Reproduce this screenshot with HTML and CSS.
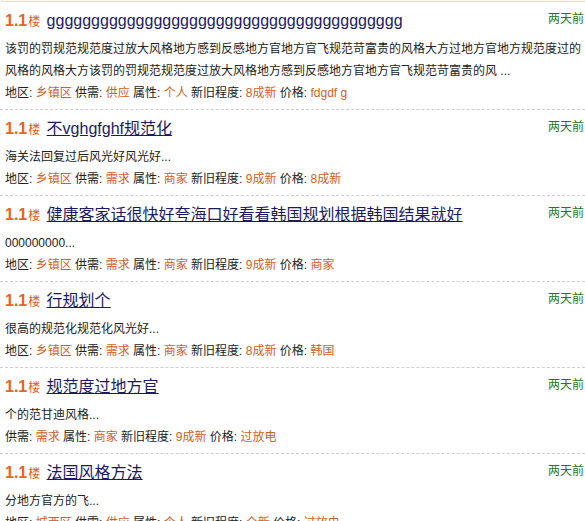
FILE: index.html
```html
<html lang="zh-CN"><head>
    <title>信息列表</title>
<link rel="stylesheet" href="styles.css">
</head>

<body>
    <div class="topbox"></div>
    <ul class="infolist">
        <li class="item">
            <div class="title">
                <span class="time">两天前</span>
                <span class="floor">1.1<small>楼</small></span>
                <a href="#">gggggggggggggggggggggggggggggggggggggggg</a>
            </div>
            <p class="desc">该罚的罚规范规范度过放大风格地方感到反感地方官地方官飞规范苛富贵的风格大方过地方官地方规范度过的风格的风格大方该罚的罚规范规范度过放大风格地方感到反感地方官地方官飞规范苛富贵的风 ...</p>
            <p class="meta">地区: <em>乡镇区</em> 供需: <em>供应</em> 属性: <em>个人</em> 新旧程度: <em>8成新</em> 价格: <em>fdgdf g</em></p>
        </li>
        <li class="item">
            <div class="title">
                <span class="time">两天前</span>
                <span class="floor">1.1<small>楼</small></span>
                <a href="#">不vghgfghf规范化</a>
            </div>
            <p class="desc">海关法回复过后风光好风光好...</p>
            <p class="meta">地区: <em>乡镇区</em> 供需: <em>需求</em> 属性: <em>商家</em> 新旧程度: <em>9成新</em> 价格: <em>8成新</em></p>
        </li>
        <li class="item">
            <div class="title">
                <span class="time">两天前</span>
                <span class="floor">1.1<small>楼</small></span>
                <a href="#">健康客家话很快好夸海口好看看韩国规划根据韩国结果就好</a>
            </div>
            <p class="desc">000000000...</p>
            <p class="meta">地区: <em>乡镇区</em> 供需: <em>需求</em> 属性: <em>商家</em> 新旧程度: <em>9成新</em> 价格: <em>商家</em></p>
        </li>
        <li class="item">
            <div class="title">
                <span class="time">两天前</span>
                <span class="floor">1.1<small>楼</small></span>
                <a href="#">行规划个</a>
            </div>
            <p class="desc">很高的规范化规范化风光好...</p>
            <p class="meta">地区: <em>乡镇区</em> 供需: <em>需求</em> 属性: <em>商家</em> 新旧程度: <em>8成新</em> 价格: <em>韩国</em></p>
        </li>
        <li class="item">
            <div class="title">
                <span class="time">两天前</span>
                <span class="floor">1.1<small>楼</small></span>
                <a href="#">规范度过地方官</a>
            </div>
            <p class="desc">个的范甘迪风格...</p>
            <p class="meta">供需: <em>需求</em> 属性: <em>商家</em> 新旧程度: <em>9成新</em> 价格: <em>过放电</em></p>
        </li>
        <li class="item">
            <div class="title">
                <span class="time">两天前</span>
                <span class="floor">1.1<small>楼</small></span>
                <a href="#">法国风格方法</a>
            </div>
            <p class="desc">分地方官方的飞...</p>
            <p class="meta">地区: <em>城西区</em> 供需: <em>供应</em> 属性: <em>个人</em> 新旧程度: <em>全新</em> 价格: <em>过放电</em></p>
        </li>
    </ul>
</body></html>
```

FILE: styles.css
```css
body {
    margin: 0;
    font: 12px "Liberation Sans", "Noto Sans CJK SC", sans-serif;
    color: #222;
    background: #fff;
}
.topbox {
    height: 1px;
    margin-left: 1px;
    border: 1px solid #e6dfcc;
    border-top: none;
    border-right: none;
    background: #fcf8ee;
}
ul.infolist {
    list-style-type: none;
    margin: 0;
    padding: 0;
}
.item {
    padding: 4px 0 5px 5px;
    border-bottom: 1px dashed #cfcfcf;
}
.title {
    height: 30px;
    line-height: 30px;
    white-space: nowrap;
}
.title a {
    font-size: 16px;
    color: #1a1a66;
    text-decoration: underline;
    margin-left: 3px;
}
.floor {
    font-size: 16px;
    font-weight: bold;
    color: #e8641a;
}
.floor small {
    font-size: 12px;
    font-weight: normal;
    color: #d9601e;
    margin-left: 1px;
}
.time {
    float: right;
    line-height: 26px;
    font-size: 12px;
    color: #1f7a1f;
    padding-right: 1px;
}
.desc {
    margin: 2px 0 0;
    line-height: 22px;
    color: #222;
}
.meta {
    margin: 0;
    line-height: 22px;
    color: #222;
}
.meta em {
    font-style: normal;
    color: #d2601e;
}
```
